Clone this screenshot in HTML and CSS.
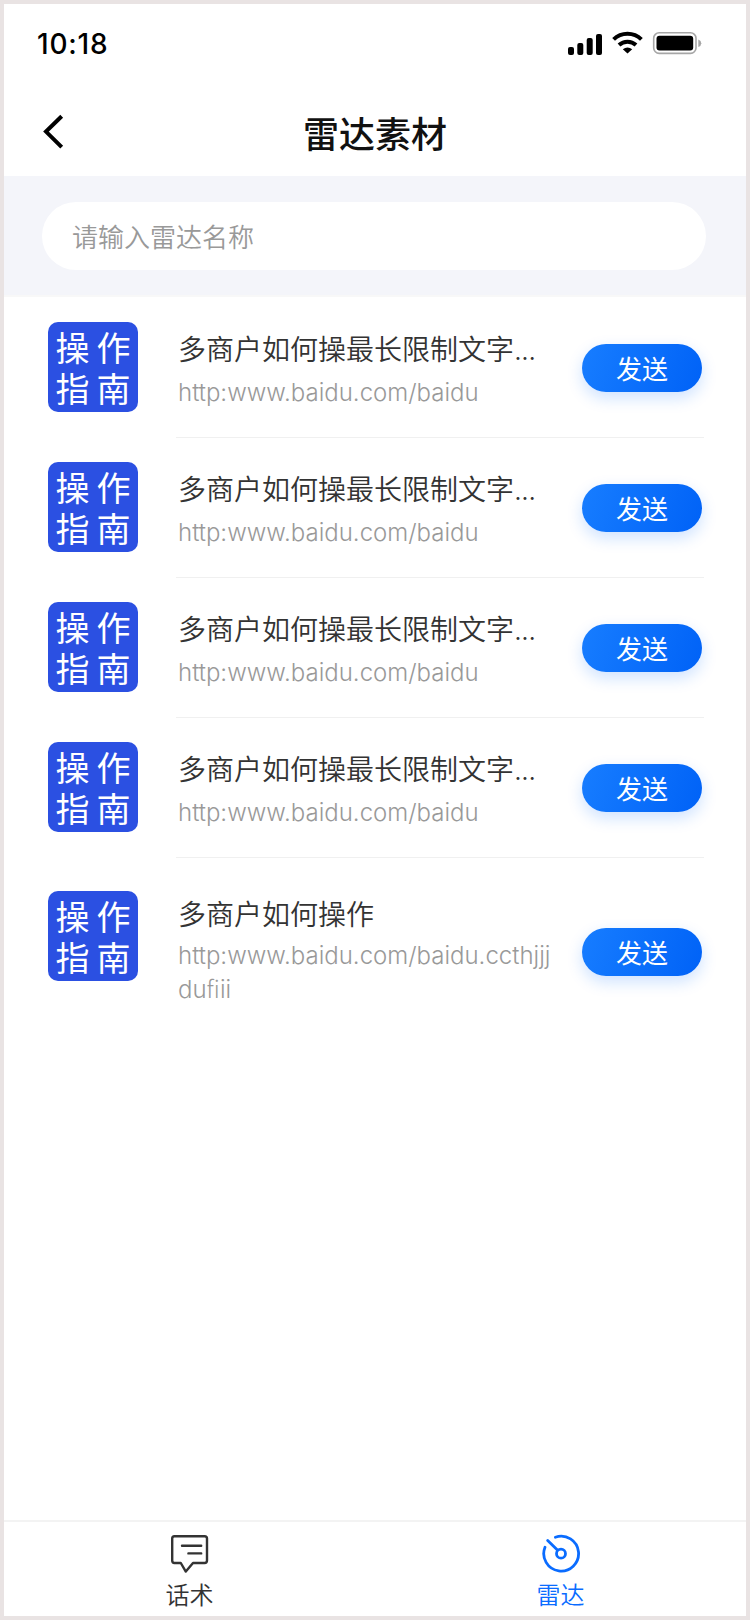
FILE: index.html
```
<!DOCTYPE html>
<html lang="zh-CN">
<head>
<meta charset="utf-8">
<title>雷达素材</title>
<link rel="stylesheet" href="styles.css">
</head>
<body>
<div class="screen">
  <div class="status">
    <span class="time">10:18</span>
    <svg class="status-icons" width="136" height="28" viewBox="0 0 136 28">
      <rect x="0" y="17" width="6" height="8" rx="2"/>
      <rect x="9.3" y="13" width="6" height="12" rx="2"/>
      <rect x="18.7" y="8" width="6" height="17" rx="2"/>
      <rect x="28" y="4" width="6" height="21" rx="2"/>
      <g fill="none" stroke="#000" stroke-width="4">
        <path d="M45.6 9.4a20 20 0 0 1 27.8 0"/>
        <path d="M51 15a12.6 12.6 0 0 1 17 0"/>
      </g>
      <path d="M54.8 19.2q4.7-3.2 9.4 0l-4.7 4.4z"/>
      <rect x="85.7" y="2.8" width="42.3" height="20.6" rx="5.5" fill="none" stroke="#a6a6a6" stroke-width="1.6"/>
      <rect x="88.5" y="5.7" width="36.7" height="14.8" rx="3"/>
      <path d="M130.3 9.5q3 1.2 3 3.8t-3 3.8z" fill="#a6a6a6"/>
    </svg>
  </div>
  <header class="header">
    <svg class="back" width="22" height="36" viewBox="0 0 22 36"><path d="M18.7 2.2 3 17.6l15.7 15.6" fill="none" stroke="#000" stroke-width="4"/></svg>
    <h1 class="title">雷达素材</h1>
  </header>
  <div class="search"><div class="search-box">请输入雷达名称</div></div>
  <main class="list">
    <div class="item">
      <div class="thumb"><span>操</span><span>作</span><span>指</span><span>南</span></div>
      <div class="body"><div class="info"><div class="name">多商户如何操最长限制文字<span class="dots">...</span></div><div class="url">http:www.baidu.com/baidu</div></div><div class="send">发送</div></div>
    </div>
    <div class="item">
      <div class="thumb"><span>操</span><span>作</span><span>指</span><span>南</span></div>
      <div class="body"><div class="info"><div class="name">多商户如何操最长限制文字<span class="dots">...</span></div><div class="url">http:www.baidu.com/baidu</div></div><div class="send">发送</div></div>
    </div>
    <div class="item">
      <div class="thumb"><span>操</span><span>作</span><span>指</span><span>南</span></div>
      <div class="body"><div class="info"><div class="name">多商户如何操最长限制文字<span class="dots">...</span></div><div class="url">http:www.baidu.com/baidu</div></div><div class="send">发送</div></div>
    </div>
    <div class="item">
      <div class="thumb"><span>操</span><span>作</span><span>指</span><span>南</span></div>
      <div class="body"><div class="info"><div class="name">多商户如何操最长限制文字<span class="dots">...</span></div><div class="url">http:www.baidu.com/baidu</div></div><div class="send">发送</div></div>
    </div>
    <div class="item item-tall">
      <div class="thumb"><span>操</span><span>作</span><span>指</span><span>南</span></div>
      <div class="body"><div class="info"><div class="name">多商户如何操作</div><div class="url">http:www.baidu.com/baidu.ccthjjj<br>du&#xfb01;ii</div></div><div class="send">发送</div></div>
    </div>
  </main>
  <nav class="tabs">
    <div class="tab">
      <svg width="40" height="40" viewBox="0 0 40 40" fill="none" stroke="#333" stroke-width="2.4" stroke-linecap="round" stroke-linejoin="round"><path d="M4.4 2.2H34.6Q37 2.2 37 4.6V26.6Q37 29 34.6 29H23L15.8 37.6 10.8 29H4.4Q2.2 29 2.2 26.6V4.6Q2.2 2.2 4.4 2.2ZM12 11.7H31.2M18.4 19.4H31.2"/></svg>
      <span>话术</span>
    </div>
    <div class="tab active">
      <svg width="40" height="40" viewBox="0 0 40 40" fill="none" stroke="#0a6cff" stroke-width="2.8" stroke-linecap="round"><path d="M14.4 3.2A17.4 17.4 0 1 1 4 13.2M6.7 6.5l9.7 9.5"/><circle cx="20" cy="19.7" r="4.5"/></svg>
      <span>雷达</span>
    </div>
  </nav>
</div>
</body>
</html>
```
FILE: styles.css
```
* { box-sizing: border-box; }
body { margin: 0; background: #e9e3e3; font-family: "Inter", "Noto Sans CJK SC", sans-serif; }
.screen { width: 750px; height: 1620px; border: 4px solid #e9e3e3; background: #fff; display: flex; flex-direction: column; }
.status { height: 84px; display: flex; justify-content: space-between; align-items: flex-start; padding: 23px 42px 0 33px; }
.time { font-size: 28px; line-height: 34px; font-weight: 500; color: #000; letter-spacing: 0.8px; }
.status-icons { margin-top: 3px; }
.header { height: 88px; display: grid; grid-template-columns: 62px 1fr 62px; align-items: center; }
.back { margin-left: 39px; }
.title { margin: 0; text-align: center; font: 500 36px/52px "Noto Sans CJK SC", sans-serif; color: #111; }
.search { height: 121px; background: #f4f5fa; padding: 26px 40px 27px 38px; border-bottom: 2px solid #f8f8f8; }
.search-box { height: 68px; border-radius: 34px; background: #fff; padding-left: 30px; font: 350 26px/68px "Noto Sans CJK SC", sans-serif; color: #999; }
.list { flex: 1; }
.item { display: flex; height: 140px; padding: 25px 42px 0 44px; }
.thumb { width: 90px; height: 90px; flex: none; border-radius: 10px; background: #2b50e2; display: grid; grid-template-columns: 41px 41px; grid-template-rows: 41px 41px; place-content: center; place-items: center; color: #fff; font: 400 34px/41px "Noto Sans CJK SC", sans-serif; }
.body { flex: 1; margin-left: 38px; height: 116px; border-bottom: 1px solid #f0f0f0; display: flex; justify-content: space-between; padding: 5px 2px 0; }
.info { width: 380px; white-space: nowrap; }
.name { font: 350 28px/42px "Noto Sans CJK SC", sans-serif; color: #333; }
.dots { font-family: "Inter", sans-serif; font-weight: 300; letter-spacing: -0.8px; }
.url { font-size: 24px; font-weight: 300; line-height: 34px; margin-top: 5px; color: #999; }
.send { width: 120px; height: 48px; margin-top: 17px; flex: none; border-radius: 24px; background: linear-gradient(110deg, #177dff, #0062f7); box-shadow: 0 6px 16px rgba(10, 108, 255, 0.2); color: #fff; text-align: center; font: 400 26px/48px "Noto Sans CJK SC", sans-serif; }
.item-tall { padding-top: 34px; }
.item-tall .body { border: 0; padding-top: 1px; }
.item-tall .send { margin-top: 36px; }
.tabs { height: 96px; border-top: 2px solid #f3f3f3; display: flex; }
.tab { flex: 1; display: flex; flex-direction: column; align-items: center; padding-top: 12px; font: 350 24px/34px "Noto Sans CJK SC", sans-serif; color: #333; }
.tab span { margin-top: 3px; }
.tab.active { color: #0a6cff; }
```
